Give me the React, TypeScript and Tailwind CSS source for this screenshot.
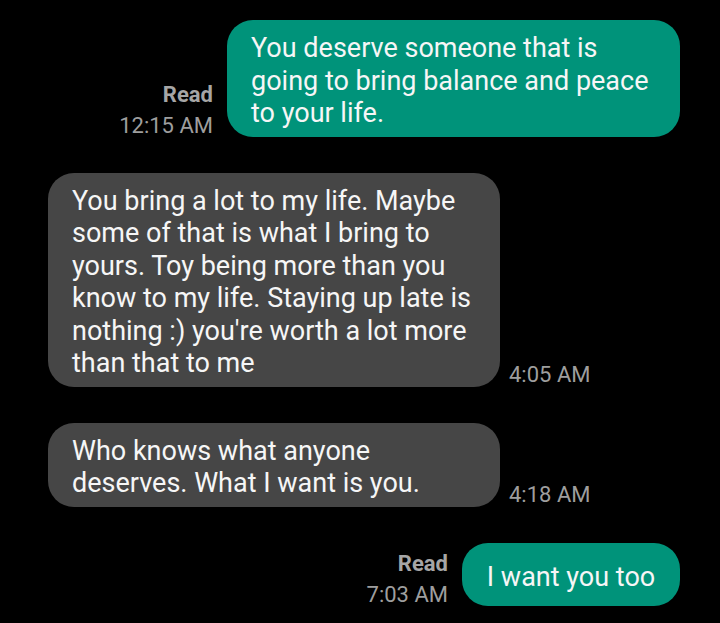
import React from "react";

type Msg = {
  from: "me" | "them";
  lines: string[];
  time: string;
  width: string;
};

const messages: Msg[] = [
  {
    from: "me",
    lines: ["You deserve someone that is", "going to bring balance and peace", "to your life."],
    time: "12:15 AM",
    width: "w-[453px]",
  },
  {
    from: "them",
    lines: [
      "You bring a lot to my life. Maybe",
      "some of that is what I bring to",
      "yours. Toy being more than you",
      "know to my life. Staying up late is",
      "nothing :) you're worth a lot more",
      "than that to me",
    ],
    time: "4:05 AM",
    width: "w-[452px]",
  },
  {
    from: "them",
    lines: ["Who knows what anyone", "deserves. What I want is you."],
    time: "4:18 AM",
    width: "w-[452px]",
  },
  {
    from: "me",
    lines: ["I want you too"],
    time: "7:03 AM",
    width: "w-[218px]",
  },
];

const Bubble = ({ msg }: { msg: Msg }) => {
  const mine = msg.from === "me";
  const single = msg.lines.length === 1;
  return (
    <div
      className={`${msg.width} rounded-[26px] px-6 text-[27px] leading-[32.5px] text-[#f6f6f6] ${
        mine ? "bg-[#00937a]" : "bg-[#464646]"
      } ${single ? "pt-[18px] pb-[13px] text-center" : "pt-[12px] pb-[7px]"}`}
    >
      {msg.lines.map((l, i) => (
        <span key={i} className="block whitespace-nowrap">
          {l}
        </span>
      ))}
    </div>
  );
};

export default function App() {
  return (
    <div
      className="min-h-[623px] w-[720px] bg-black pt-5 pl-12 pr-10 flex flex-col gap-9"
      style={{ fontFamily: "Roboto, 'Liberation Sans', sans-serif" }}
    >
      {messages.map((m, i) =>
        m.from === "me" ? (
          <div key={i} className="flex justify-end items-end gap-[14px]">
            <div className="text-right text-[22px] leading-[31px] text-[#9e9e9e] mb-[-4px]">
              <div className="font-bold text-[#a6a6a6]">Read</div>
              <div>{m.time}</div>
            </div>
            <Bubble msg={m} />
          </div>
        ) : (
          <div key={i} className="flex items-end gap-[9px]">
            <Bubble msg={m} />
            <div className="text-[22px] leading-[30px] text-[#9e9e9e] mb-[-3px] whitespace-nowrap">
              {m.time}
            </div>
          </div>
        )
      )}
    </div>
  );
}
